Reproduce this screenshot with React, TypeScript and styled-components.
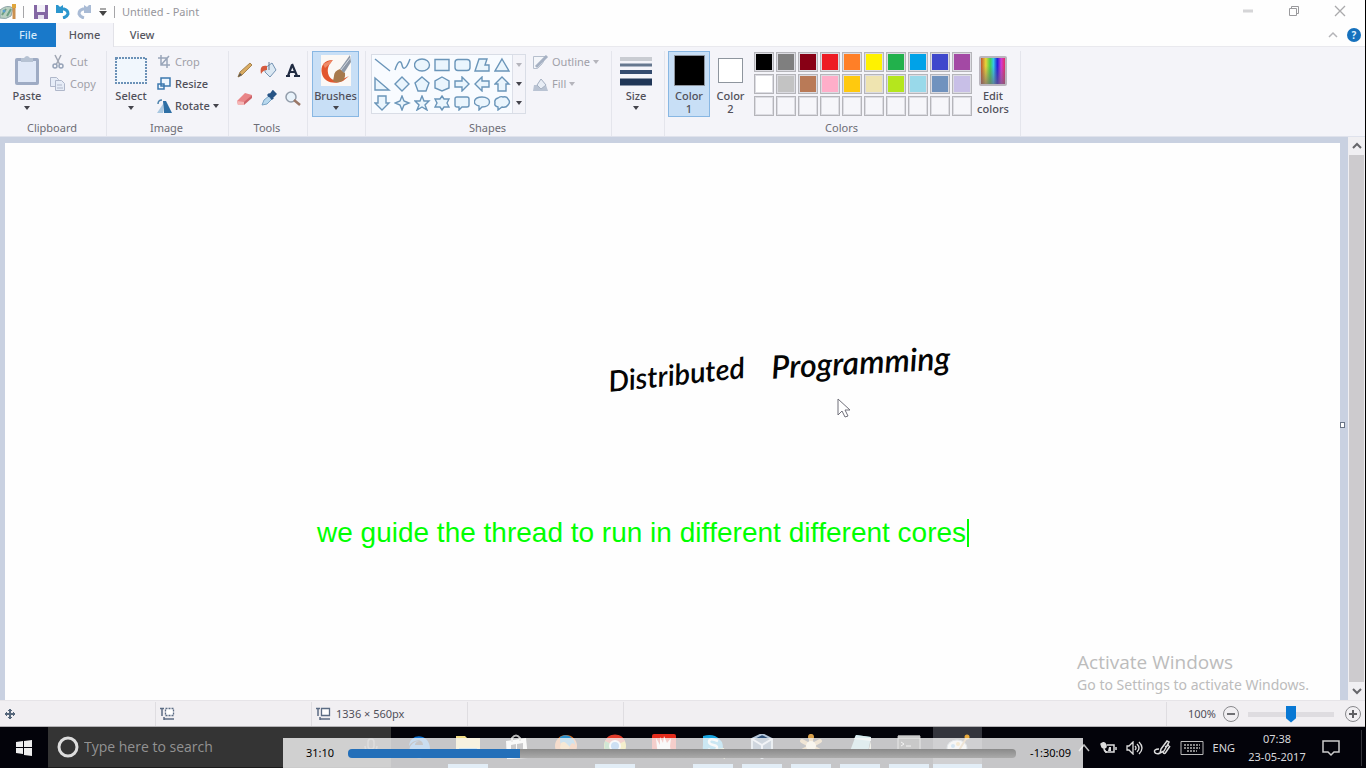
import React from "react";
import styled, { createGlobalStyle } from "styled-components";

const GlobalStyle = createGlobalStyle`
  *, *::before, *::after { box-sizing: border-box; }
  body { margin: 0; background: #000; font-family: "Noto Sans", "Open Sans", sans-serif; font-size: 11px; line-height: 14px; color: #50505a; }
  button { font: inherit; color: inherit; background: none; border: 0; padding: 0; margin: 0; cursor: pointer; }
  svg { display: block; flex: none; }
`;

const Screen = styled.div`
  position: relative;
  display: flex;
  flex-direction: column;
  height: 100vh;
  min-height: 480px;
  overflow: hidden;
`;
const PaintWindow = styled.div`
  flex: 1;
  min-height: 0;
  display: flex;
  flex-direction: column;
  margin-right: 1px;
  background: #f4f4f9;
`;

/* ---------- title bar and tabs ---------- */
const TitleBar = styled.header`
  display: flex;
  align-items: center;
  height: 23px;
  padding-right: 19px;
  background: #fefefe;
`;
const QuickAccess = styled.div`
  display: flex;
  align-items: center;
`;
const QuickButton = styled.button<{ $w?: number }>`
  display: flex;
  align-items: center;
  justify-content: center;
  width: ${(p) => p.$w ?? 22}px;
  height: 22px;
`;
const Divider = styled.span<{ $before?: number }>`
  width: 1px;
  height: 12px;
  margin-left: ${(p) => p.$before ?? 0}px;
  background: #a5a5a8;
`;
const Title = styled.h1`
  flex: 1;
  margin: 0 0 0 7px;
  font-size: 11px;
  font-weight: 400;
  color: #96969c;
`;
const WindowButtons = styled.div`
  display: flex;
  gap: 34px;
`;
const WindowButton = styled.button`
  width: 12px;
  height: 20px;
  display: flex;
  align-items: flex-start;
  padding-top: 3px;
`;
const TabBar = styled.nav`
  display: flex;
  align-items: stretch;
  height: 24px;
  background: #fefefe;
  border-bottom: 1px solid #e9e9ee;
`;
const Tab = styled.button<{ $kind?: "file" | "active" }>`
  width: ${(p) => (p.$kind === "active" ? 58 : 56)}px;
  height: 24px;
  font-weight: 500;
  color: ${(p) => (p.$kind === "file" ? "#d6ebfb" : "#55555e")};
  background: ${(p) =>
    p.$kind === "file" ? "#1979ca" : p.$kind === "active" ? "#f4f4f9" : "none"};
  border-right: ${(p) => (p.$kind === "active" ? "1px solid #e2e2e8" : "0")};
`;
const TabTools = styled.div`
  display: flex;
  align-items: center;
  gap: 9px;
  margin-left: auto;
  padding-right: 4px;
`;
const HelpButton = styled.button`
  width: 14px;
  height: 14px;
  border-radius: 50%;
  background: #1671bd;
  color: #dceefc;
  font-size: 10px;
  font-weight: 700;
  line-height: 14px;
`;

/* ---------- ribbon ---------- */
const Ribbon = styled.div`
  display: flex;
  height: 89px;
  padding-top: 4px;
  background: #f4f4f9;
`;
const Group = styled.section<{ $w: number }>`
  flex: none;
  display: flex;
  flex-direction: column;
  width: ${(p) => p.$w}px;
  border-right: 1px solid #e4e5ec;
`;
const GroupBody = styled.div<{ $pad?: number; $gap?: number }>`
  flex: 1;
  display: flex;
  align-items: flex-start;
  gap: ${(p) => p.$gap ?? 0}px;
  padding-left: ${(p) => p.$pad ?? 0}px;
`;
const GroupLabel = styled.h2`
  height: 15px;
  margin: 0;
  padding-right: 2px;
  font-size: 11px;
  font-weight: 400;
  text-align: center;
  color: #6c6c75;
`;
const BigButton = styled.button<{ $w: number; $on?: boolean }>`
  display: flex;
  flex-direction: column;
  align-items: center;
  width: ${(p) => p.$w}px;
  height: 66px;
  border: 1px solid ${(p) => (p.$on ? "#88b7e3" : "transparent")};
  background: ${(p) => (p.$on ? "#c8dff6" : "none")};
`;
const BigArt = styled.span`
  display: flex;
  align-items: center;
  justify-content: center;
  height: 37px;
`;
const BigText = styled.span`
  line-height: 13px;
  font-weight: 500;
`;
const Caret = styled.span<{ $dim?: boolean }>`
  border: 3px solid transparent;
  border-top: 4px solid ${(p) => (p.$dim ? "#b5b5bc" : "#44444c")};
  border-bottom: 0;
`;
const CaretGap = styled(Caret)`
  margin-top: 4px;
`;
const Stack = styled.div`
  display: flex;
  flex-direction: column;
  align-items: flex-start;
`;
const SmallButton = styled.button<{ $dim?: boolean; $strong?: boolean }>`
  display: flex;
  align-items: center;
  gap: 3px;
  height: 22px;
  color: ${(p) => (p.$dim ? "#a0a0a8" : "#50505a")};
  font-weight: ${(p) => (p.$strong ? 500 : 400)};
`;
const ToolGrid = styled.div`
  display: grid;
  grid-template-columns: repeat(3, 24px);
  grid-auto-rows: 28px;
  padding-top: 5px;
`;
const IconButton = styled.button`
  display: flex;
  align-items: center;
  justify-content: center;
`;
const Gallery = styled.div`
  display: flex;
  height: 60px;
  margin-top: 3px;
  border: 1px solid #d9dde6;
  background: #f8fbff;
`;
const ShapeGrid = styled.div`
  display: grid;
  grid-template-columns: repeat(7, 20px);
  grid-auto-rows: 19px;
`;
const GalleryScroll = styled.div`
  display: flex;
  flex-direction: column;
  justify-content: space-around;
  align-items: center;
  width: 13px;
  border-left: 1px solid #dcdfe8;
  background: #f4f4f9;
`;
const ColorChip = styled.span<{ $c: string; $size: number }>`
  width: ${(p) => p.$size}px;
  height: ${(p) => p.$size}px;
  border: 1px solid #8e959e;
  background: ${(p) => p.$c};
`;
const Palette = styled.div`
  display: grid;
  grid-template-columns: repeat(10, 20px);
  grid-auto-rows: 20px;
  gap: 2px;
  margin: 1px 0 0 3px;
`;
const Swatch = styled.button<{ $c: string }>`
  border: 1px solid #b5b5ba;
  background: ${(p) => p.$c};
  box-shadow: inset 0 0 0 1px #dcdce2;
`;
const Spectrum = styled.span`
  width: 28px;
  height: 30px;
  border: 2px solid #b9b5bd;
  border-radius: 2px;
  background: linear-gradient(180deg, transparent 30%, rgba(110, 100, 120, 0.65)),
    linear-gradient(90deg, #c0552e, #e8d53a 20%, #46d04c 38%, #35c8e6 52%, #2020d8 68%, #d03ad6 84%, #e03060);
`;

/* ---------- drawing area ---------- */
const Workspace = styled.main`
  flex: 1;
  min-height: 0;
  display: flex;
  border-top: 1px solid #dfe2ec;
`;
const Desk = styled.div`
  flex: 1;
  min-width: 0;
  padding: 6px 8px 0 5px;
  background: #c9d1e1;
`;
const Sheet = styled.div`
  position: relative;
  height: 100%;
  background: #fefefe;
`;
const Ink = styled.span<{ $x: number; $y: number; $size: number; $tilt: number }>`
  position: absolute;
  left: ${(p) => p.$x}px;
  top: ${(p) => p.$y}px;
  font: italic 600 ${(p) => p.$size}px/32px "Lato", sans-serif;
  color: #050505;
  white-space: nowrap;
  transform: rotate(${(p) => p.$tilt}deg);
`;
const Pointer = styled.svg`
  position: absolute;
  left: 832px;
  top: 255px;
`;
const Caption = styled.p`
  position: absolute;
  left: 312px;
  top: 376px;
  margin: 0;
  padding-right: 1px;
  border-right: 2px solid #00ff00;
  font: 28px/28px "Liberation Sans", Arial, sans-serif;
  font-kerning: none;
  font-variant-ligatures: none;
  color: #00ff00;
  white-space: nowrap;
`;
const Watermark = styled.aside`
  position: absolute;
  right: 31px;
  bottom: 4px;
  color: #bcbcbc;
`;
const WatermarkTitle = styled.p`
  margin: 0;
  font: 19px/24px "Open Sans", sans-serif;
`;
const WatermarkText = styled.p`
  margin: 0;
  font-size: 14px;
  line-height: 22px;
`;
const ResizeHandle = styled.span`
  position: absolute;
  right: -5px;
  top: 50%;
  width: 5px;
  height: 6px;
  border: 1px solid #697486;
  background: #fff;
`;
const ScrollBar = styled.div`
  display: flex;
  flex-direction: column;
  width: 17px;
  background: #f0eff2;
`;
const ScrollArrow = styled.button`
  display: flex;
  align-items: center;
  justify-content: center;
  height: 18px;
`;
const ScrollThumb = styled.div`
  flex: 1;
  margin: 0 1px;
  background: #cdcbce;
`;

/* ---------- status bar ---------- */
const StatusBar = styled.footer`
  display: flex;
  align-items: stretch;
  height: 27px;
  padding-top: 1px;
  background: #f1eff2;
  border-top: 1px solid #e6e4e8;
  border-bottom: 1px solid #b5b3b6;
`;
const StatusCell = styled.div<{ $w?: number }>`
  display: flex;
  align-items: center;
  gap: 5px;
  width: ${(p) => (p.$w ? p.$w + "px" : "auto")};
  flex: ${(p) => (p.$w ? "none" : "1")};
  padding-left: 4px;
  border-right: 1px solid #dfdde1;
`;
const ZoomBox = styled.div`
  display: flex;
  align-items: center;
  gap: 7px;
  padding: 0 4px 0 21px;
`;
const RoundButton = styled.button`
  display: flex;
  align-items: center;
  justify-content: center;
  width: 16px;
  height: 16px;
  border: 1px solid #88888c;
  border-radius: 50%;
`;
const ZoomSlider = styled.input`
  appearance: none;
  width: 86px;
  height: 18px;
  margin: 0 4px 0 2px;
  background: linear-gradient(#dedce0, #dedce0) center / 100% 5px no-repeat;
  &::-webkit-slider-thumb {
    appearance: none;
    width: 10px;
    height: 17px;
    background: #0878d4;
    clip-path: polygon(0 0, 100% 0, 100% 75%, 50% 100%, 0 75%);
  }
`;

/* ---------- taskbar ---------- */
const Taskbar = styled.div`
  flex: none;
  display: flex;
  align-items: stretch;
  height: 41px;
  background: #03030a;
  color: #d8d8dc;
`;
const StartButton = styled.button`
  display: flex;
  align-items: center;
  justify-content: center;
  width: 48px;
`;
const SearchBox = styled.label`
  display: flex;
  align-items: center;
  gap: 5px;
  width: 343px;
  padding: 0 12px 0 9px;
  background: #343434;
  border-bottom: 1px solid #1b1b1b;
`;
const SearchInput = styled.input`
  flex: 1;
  min-width: 0;
  padding: 0;
  border: 0;
  outline: 0;
  background: none;
  font: 14px/18px "Open Sans", sans-serif;
  color: #ddd;
  &::placeholder { color: #929292; opacity: 1; }
`;
const AppList = styled.div`
  display: flex;
  padding-left: 3px;
`;
const AppButton = styled.button<{ $open?: boolean; $active?: boolean }>`
  display: flex;
  align-items: flex-start;
  justify-content: center;
  width: 49px;
  padding-top: 7px;
  background: ${(p) => (p.$active ? "#33343c" : "none")};
  background-image: ${(p) =>
    p.$open ? "linear-gradient(#8cc4f0, #8cc4f0)" : "none"};
  background-size: ${(p) => (p.$active ? "100% 4px" : "40px 4px")};
  background-position: center bottom;
  background-repeat: no-repeat;
`;
const Tray = styled.div`
  display: flex;
  align-items: center;
  gap: 9px;
  margin-left: auto;
  padding-right: 4px;
`;
const Clock = styled.time`
  width: 66px;
  text-align: center;
  line-height: 18px;
`;
const TrayText = styled.span`
  line-height: 18px;
`;
const Notice = styled.button`
  margin: 0 12px 0 3px;
`;
const DesktopEdge = styled.span`
  width: 1px;
  height: 36px;
  background: #34343a;
`;

/* ---------- video controls ---------- */
const Player = styled.div`
  position: absolute;
  left: 283px;
  right: 283px;
  bottom: 0;
  display: flex;
  align-items: center;
  gap: 14px;
  height: 30px;
  padding: 0 12px 0 23px;
  background: rgba(247, 247, 247, 0.8);
  color: #000;
`;
const Seek = styled.input`
  appearance: none;
  flex: 1;
  min-width: 0;
  height: 9px;
  margin: 0;
  border-radius: 4px;
  background: linear-gradient(90deg, #236fb9 25.7%, transparent 25.7%),
    linear-gradient(#8a8a8a, #aaaaaa);
  &::-webkit-slider-thumb { appearance: none; width: 1px; height: 9px; }
`;

const blue = { fill: "#eaf5fd", stroke: "#6a95b9", strokeWidth: 1.4 };
const shapes: [string, React.ReactNode][] = [
  ["Line", <path d="M1 2l15 12" />],
  ["Curve", <path fill="none" d="M1 13C4 3 7 3 8 8s4 5 8-6" />],
  ["Oval", <ellipse cx="8" cy="8" rx="7.500" ry="6" />],
  ["Rectangle", <path d="M1 2.500h14v11H1z" />],
  ["Rounded rectangle", <rect x="1" y="2.500" width="15" height="11" rx="3" />],
  ["Polygon", <path d="M5 2h8l-2 6h4v6H1z" />],
  ["Triangle", <path d="M8 2l7 12H1z" />],
  ["Right triangle", <path d="M1 2v12h14z" />],
  ["Diamond", <path d="M8 1l7 7-7 7-7-7z" />],
  ["Pentagon", <path d="M8 1l7 6-3 8H4L1 7z" />],
  ["Hexagon", <path d="M8 1l7 4v7l-7 3-7-3V5z" />],
  ["Right arrow", <path d="M1 5h7V1l7 7-7 7v-4H1z" />],
  ["Left arrow", <path d="M15 5H8V1L1 8l7 7v-4h7z" />],
  ["Up arrow", <path d="M4 15V8H1l7-7 7 7h-3v7z" />],
  ["Down arrow", <path d="M4 1v7H1l7 7 7-7h-3V1z" />],
  ["Four-point star", <path d="M8 1l2 5 5 2-5 2-2 5-2-5-5-2 5-2z" />],
  ["Five-point star", <path d="M8 1l2 5h5l-4 4 2 5-5-3-5 3 2-5-4-4h5z" />],
  ["Six-point star", <path d="M8 1l2 3h5l-2 4 2 4h-5l-2 3-2-3H1l2-4-2-4h5z" />],
  ["Rounded callout", <path d="M3 2h10q2 0 2 2v6q0 2-2 2H8l-3 3v-3H3q-2 0-2-2V4q0-2 2-2z" />],
  ["Oval callout", <path d="M8 2c10 0 10 10 0 10l-3 3v-4C-2 10 -1 2 8 2z" />],
  ["Cloud callout", <path d="M4 3q3-2 5-1 4-1 5 2 3 3 0 6-2 3-6 2l-4 3v-3Q0 11 1 8 0 4 4 3z" />],
];

const palette = [
  ["#000000", "Black"], ["#7f7f7f", "Gray"], ["#880015", "Dark red"], ["#ed1c24", "Red"], ["#ff7f27", "Orange"],
  ["#fff200", "Yellow"], ["#22b14c", "Green"], ["#00a2e8", "Turquoise"], ["#3f48cc", "Indigo"], ["#a349a4", "Purple"],
  ["#ffffff", "White"], ["#c3c3c3", "Light gray"], ["#b97a57", "Brown"], ["#ffaec9", "Rose"], ["#ffc90e", "Gold"],
  ["#efe4b0", "Light yellow"], ["#b5e61d", "Lime"], ["#99d9ea", "Light turquoise"], ["#7092be", "Blue-gray"], ["#c8bfe7", "Lavender"],
  ...Array.from({ length: 10 }, (_, i) => ["#f6f6fa", `Custom color ${i + 1}`]),
];

const tools: [string, React.ReactNode][] = [
  ["Pencil", <><path d="M2 15l2-5L14 1l2 2L6 13z" fill="#d9ab62" stroke="#a68350" /><path d="M2 15l2-4 2 2z" fill="#555" /></>],
  ["Fill", <><path d="M5 6l7-5 4 7-6 7-5-5z" fill="#dbe8f3" stroke="#7493b3" /><path d="M9 0v8" stroke="#667b91" /><path d="M7 4C1 3 0 6 1 12c2-3 3-4 6-4z" fill="#d65a3d" /></>],
  ["Text", <path d="M8 2l5 12M8 3L4 14M2 14h4M10 14h6M6 10h5" stroke="#202b42" strokeWidth="2.200" fill="none" />],
  ["Eraser", <><path d="M1 11L9 3l7 2-8 9-6 1z" fill="#e98588" /><path d="M1 11l7 1v3H2z" fill="#f5b6b6" /><path d="M8 12l8-7v3l-8 7z" fill="#ce6268" /></>],
  ["Color picker", <><path d="M2 15l2-5 5-4 3 3-5 5z" fill="#b7d8ee" stroke="#7ba4c5" /><path d="M8 4l5 5M10 6l3-4 2 2-3 3z" stroke="#275486" strokeWidth="3" /></>],
  ["Magnifier", <><circle cx="7" cy="7" r="5" fill="#e8f2fa" stroke="#929dab" strokeWidth="1.500" /><path d="M10 10l6 5" stroke="#9a7767" strokeWidth="2.500" /></>],
];

const BucketPaint = () => (
  <>
    <ellipse cx="11" cy="14" rx="10" ry="8" fill="#edf0f0" stroke="#889aab" />
    <circle cx="7" cy="12" r="2" fill="#4d9bd6" /><circle cx="12" cy="10" r="2" fill="#e8ae41" /><circle cx="8" cy="17" r="2" fill="#62a65b" />
    <path d="M12 18L21 3" stroke="#c28f46" strokeWidth="2" /><circle cx="21" cy="3" r="2.500" fill="#e8aa3d" />
  </>
);

const apps: { name: string; open?: boolean; active?: boolean; art: React.ReactNode }[] = [
  { name: "Edge", art: <path d="M2 12C3-2 23-1 23 15H8c1 7 9 6 13 3v4C11 28 0 21 3 13c2-4 6-6 9-6-3 1-4 2-4 4h8C16 4 6 5 2 12z" fill="#0f73d2" /> },
  { name: "File Explorer", open: true, art: <><path d="M0 2h9l2 2h13v20H0z" fill="#f2dc84" /><path d="M3 14h18v10h-5v-4H8v4H3z" fill="#3f9fe0" /></> },
  { name: "Store", art: <><path d="M1 7l20-3 2 20-21 1z" fill="#fff" /><path d="M7 8V4q4-5 8 0v3" fill="none" stroke="#bbb" strokeWidth="2" /><path d="M6 11l5-1v5H6zM12 10l6-1v6h-6zM6 16h5v5l-5-1zM12 16h6v6l-6-1z" fill="#18181e" /></> },
  { name: "Firefox", art: <><circle cx="12" cy="12" r="11" fill="#e87020" /><path d="M6 3c7-5 15 1 15 8-2-3-4-2-5 1-3 7-11 2-10-9z" fill="#2c8fca" /><path d="M7 9q3-2 5 0l4 4q-5 7-10 1z" fill="#efb04c" /></> },
  { name: "Chrome", open: true, art: <><circle cx="12" cy="12" r="11" fill="#ecc820" /><path d="M12 12L2 7A11 11 0 0122 7z" fill="#e03a2a" /><path d="M12 12L2 7q-3 13 9 16z" fill="#38a24a" /><circle cx="12" cy="12" r="5" fill="#2c80e0" stroke="#fff" strokeWidth="2" /></> },
  { name: "Recorder", art: <><rect y="0" width="24" height="24" rx="2" fill="#e32c1c" /><path d="M4 4l4 7V3l3 6 1-7 3 7 4-5-1 8q2 7-5 10-7 0-8-8z" fill="#fff" /></> },
  { name: "Skype", open: true, art: <><path d="M2 2q7-2 12 0 9 4 8 14-1 9-10 6Q0 21 2 11z" fill="#1aa5e0" /><path d="M17 7q-9-4-9 1c0 4 9 2 8 6 0 4-7 3-9 1" fill="none" stroke="#fff" strokeWidth="2.500" /><path d="M14 15l9-1 2 11-6-2z" fill="#d9e39a" /></> },
  { name: "VirtualBox", open: true, art: <><path d="M2 5l10-5 10 5v14l-10 5L2 19z" fill="#2f5078" stroke="#b4c5d8" strokeWidth="2" /><path d="M2 5l10 6 10-6M12 11v13" fill="none" stroke="#d6e1ef" strokeWidth="2" /></> },
  { name: "Cluster", open: true, art: <><path d="M12 2v20M3 7l18 10M21 7L3 17" stroke="#d29c4b" strokeWidth="4" strokeLinecap="round" /><circle cx="12" cy="12" r="5" fill="#fbe8c5" /><circle cx="12" cy="3" r="3" fill="#d8a04b" /></> },
  { name: "Notepad", open: true, art: <><path d="M8 1l15 2-4 20-18-3z" fill="#86c4ca" /><path d="M8 1l15 2v4L6 5z" fill="#ddecee" /><path d="M19 23l4-16v16z" fill="#d8d4b7" /></> },
  { name: "Command Prompt", open: true, art: <><path d="M1 2h22v19H1z" fill="#111" stroke="#aaa" /><path d="M1 3h22" stroke="#ccc" strokeWidth="3" /><path d="M4 8l3 2-3 2M9 12h5" stroke="#ddd" fill="none" /></> },
  { name: "Paint", open: true, active: true, art: <BucketPaint /> },
];

const SizeIcon = ({ dashed }: { dashed?: boolean }) => (
  <svg width="15" height="14" fill="none" stroke="#5c6c84">
    <path d="M2 1v8M0 1.500h4" strokeWidth="1.500" />
    <path d="M5.500 1.500h8v7h-8z" fill="#fff" strokeWidth="1.300" strokeDasharray={dashed ? "2 1" : undefined} />
    <path d="M4 12h10M4 10v3" strokeWidth="1.500" />
  </svg>
);

export default function App() {
  return (
    <Screen>
      <GlobalStyle />
      <PaintWindow>
        <TitleBar>
          <QuickAccess>
            <svg width="23" height="20" viewBox="0 0 23 20"><path d="M0 8q7-6 13-2l-2 8q-5 4-11 2z" fill="#b9cfc0" stroke="#8fa5a8" /><path d="M2 13l4-6M7 14l4-7" stroke="#6e9f83" strokeWidth="2" /><circle cx="4" cy="9" r="1.500" fill="#5a9fd0" /><path d="M14 4v13" stroke="#cb9150" strokeWidth="3" /><path d="M14 2v4" stroke="#e0a63c" strokeWidth="4" /></svg>
            <Divider />
            <QuickButton aria-label="Save" $w={34}><svg width="14" height="14"><path d="M0 0h14v14H0z" fill="#8467a4" /><path d="M3 0h8v7H3z" fill="#f2f0f8" /><path d="M4 10h6v4H4z" fill="#e5e0ef" /></svg></QuickButton>
            <QuickButton $w={10} aria-label="Undo"><svg width="14" height="15" viewBox="0 0 14 15"><path d="M3 5h5q4 1 4 5-1 3-5 4" fill="none" stroke="#2b96ce" strokeWidth="3" /><path d="M0 1h2l2 2 3-2v8H0z" fill="#2b96ce" /></svg></QuickButton>
            <QuickButton $w={32} aria-label="Redo"><svg width="14" height="15" viewBox="0 0 14 15"><path d="M11 5H6Q2 6 2 10q1 3 5 4" fill="none" stroke="#a9bbd5" strokeWidth="3" /><path d="M14 1h-2l-2 2-3-2v8h7z" fill="#a9bbd5" /></svg></QuickButton>
            <QuickButton $w={6} aria-label="Customize"><svg width="8" height="8"><path d="M1 1h6" stroke="#555" /><path d="M0 3h8L4 8z" fill="#444" /></svg></QuickButton>
            <Divider $before={8} />
          </QuickAccess>
          <Title>Untitled - Paint</Title>
          <WindowButtons>
            <WindowButton aria-label="Minimize"><svg width="12" height="12"><path d="M1 6h10" stroke="#d5d5d7" strokeWidth="3" /></svg></WindowButton>
            <WindowButton aria-label="Restore"><svg width="12" height="12" fill="none" stroke="#9a9a9d"><path d="M1.500 3.500h7v7h-7zM3.500 3V1.500h7v7H9" /></svg></WindowButton>
            <WindowButton aria-label="Close"><svg width="12" height="12"><path d="M1 1l10 10M11 1L1 11" stroke="#aaaaac" strokeWidth="1.300" /></svg></WindowButton>
          </WindowButtons>
        </TitleBar>

        <TabBar>
          <Tab $kind="file">File</Tab>
          <Tab $kind="active">Home</Tab>
          <Tab>View</Tab>
          <TabTools>
            <button aria-label="Collapse ribbon"><svg width="10" height="8"><path d="M1 6l4-4 4 4" fill="none" stroke="#b4b4b8" strokeWidth="1.500" /></svg></button>
            <HelpButton aria-label="Help">?</HelpButton>
          </TabTools>
        </TabBar>

        <Ribbon>
          <Group $w={107}>
            <GroupBody $pad={6}>
              <BigButton $w={42}>
                <BigArt><svg width="26" height="32"><rect x="1" y="3" width="24" height="27" rx="2" fill="#9eabc4" /><path d="M4 6h18v21H4z" fill="#e0e8f7" /><path d="M7 3h3q3-4 6 0h3v4H7z" fill="#b6c2d3" /></svg></BigArt>
                <BigText>Paste</BigText><CaretGap />
              </BigButton>
              <Stack>
                <SmallButton $dim><svg width="19" height="16" viewBox="0 0 19 16"><path d="M7 1l5 10M13 1L8 11" stroke="#a0a6b3" strokeWidth="1.500" /><circle cx="7" cy="12" r="2" fill="none" stroke="#96a3b8" strokeWidth="1.500" /><circle cx="13" cy="12" r="2" fill="none" stroke="#96a3b8" strokeWidth="1.500" /></svg>Cut</SmallButton>
                <SmallButton $dim><svg width="19" height="16" viewBox="0 0 19 16" fill="#e6ecf7" stroke="#afb7ca"><path d="M2.500 1.500h6l2 2v7h-8z" /><path d="M7.500 4.500h6l3 3v7h-9z" /><path d="M9 9h5M9 12h6" /></svg>Copy</SmallButton>
              </Stack>
            </GroupBody>
            <GroupLabel>Clipboard</GroupLabel>
          </Group>

          <Group $w={122}>
            <GroupBody $pad={4} $gap={6}>
              <BigButton $w={40}>
                <BigArt><svg width="32" height="28"><rect x="1" y="1" width="30" height="25" fill="#f1f7fd" stroke="#6b91b7" strokeWidth="2" strokeDasharray="2 1" /></svg></BigArt>
                <BigText>Select</BigText><CaretGap />
              </BigButton>
              <Stack>
                <SmallButton $dim><svg width="15" height="14" viewBox="0 0 15 14" fill="none" stroke="#99a5b9" strokeWidth="1.500"><path d="M4 0v10h9M1 3h9v10M4 10l8-9" /></svg>Crop</SmallButton>
                <SmallButton $strong><svg width="15" height="14" viewBox="0 0 15 14" fill="#eef6fe" stroke="#3c78ae" strokeWidth="1.500"><path d="M4 1h9v8H4zM1 7h6v5H1z" /></svg>Resize</SmallButton>
                <SmallButton $strong><svg width="15" height="14" viewBox="0 0 15 14"><path d="M6 5v9H0z" fill="#a9c8e1" /><path d="M6 2h3l6 12H7z" fill="#2e6fa5" /><path d="M1 5q0-4 4-4" fill="none" stroke="#4e83ad" strokeWidth="1.500" /></svg>Rotate<Caret /></SmallButton>
              </Stack>
            </GroupBody>
            <GroupLabel>Image</GroupLabel>
          </Group>

          <Group $w={79}>
            <GroupBody $pad={3}>
              <ToolGrid>
                {tools.map(([name, art]) => (
                  <IconButton key={name} aria-label={name}><svg width="17" height="17" viewBox="0 0 17 17">{art}</svg></IconButton>
                ))}
              </ToolGrid>
            </GroupBody>
            <GroupLabel>Tools</GroupLabel>
          </Group>

          <Group $w={58}>
            <GroupBody $pad={4}>
              <BigButton $w={47} $on>
                <BigArt><svg width="32" height="33"><path d="M1 1h30v31H1z" fill="#fbf8f5" /><path d="M13 6C4 6 0 12 2 20c2 8 12 11 21 7l6-5c-9 5-17 6-20 0-3-7 0-12 4-16z" fill="#e2562e" /><path d="M3 10l9-4-1 3-6 5z" fill="#ee8a68" /><path d="M14 22q0-5 6-7l5 4q1 7-5 9-5 1-7-1z" fill="#a7794c" /><path d="M20 15L30 1l1 7-7 11z" fill="#8e98a6" /><path d="M21 16L31 3" stroke="#d5dbe2" /></svg></BigArt>
                <BigText>Brushes</BigText><CaretGap />
              </BigButton>
            </GroupBody>
          </Group>

          <Group $w={246}>
            <GroupBody $pad={5} $gap={6}>
              <Gallery>
                <ShapeGrid>
                  {shapes.map(([name, art]) => (
                    <IconButton key={name} aria-label={name}><svg width="17" height="16" viewBox="0 0 17 16" {...blue}>{art}</svg></IconButton>
                  ))}
                </ShapeGrid>
                <GalleryScroll><Caret $dim /><Caret /><Caret /></GalleryScroll>
              </Gallery>
              <Stack>
                <SmallButton $dim><svg width="17" height="15" viewBox="0 0 17 15"><path d="M1.500 1.500h12l-3 7-5 5h-4z" fill="#f4f6fa" stroke="#b6bfcd" /><path d="M4 12L15 1" stroke="#a6b1c3" strokeWidth="3" /></svg>Outline<Caret $dim /></SmallButton>
                <SmallButton $dim><svg width="17" height="15" viewBox="0 0 17 15"><path d="M1 14l1-6h3l4-6 5 6 2 6z" fill="#b9c3d3" /><path d="M5 8l4-6 5 6-5 4z" fill="#e8edf5" stroke="#a6b1c2" /></svg>Fill<Caret $dim /></SmallButton>
              </Stack>
            </GroupBody>
            <GroupLabel>Shapes</GroupLabel>
          </Group>

          <Group $w={53}>
            <GroupBody $pad={3}>
              <BigButton $w={42}>
                <BigArt><svg width="32" height="30"><path d="M0 3h32" stroke="#c9ccd2" strokeWidth="4" /><path d="M0 9h32" stroke="#65778e" strokeWidth="3" /><path d="M0 16h32" stroke="#344b6f" strokeWidth="4" /><path d="M0 26h32" stroke="#203657" strokeWidth="7" /></svg></BigArt>
                <BigText>Size</BigText><CaretGap />
              </BigButton>
            </GroupBody>
          </Group>

          <Group $w={356}>
            <GroupBody $pad={3} $gap={1}>
              <BigButton $w={42} $on><BigArt><ColorChip $c="#000" $size={31} /></BigArt><BigText>Color<br />1</BigText></BigButton>
              <BigButton $w={39}><BigArt><ColorChip $c="#fff" $size={25} /></BigArt><BigText>Color<br />2</BigText></BigButton>
              <Palette>
                {palette.map(([c, name]) => <Swatch key={name} $c={c} aria-label={name} />)}
              </Palette>
              <BigButton $w={40}><BigArt><Spectrum /></BigArt><BigText>Edit<br />colors</BigText></BigButton>
            </GroupBody>
            <GroupLabel>Colors</GroupLabel>
          </Group>
        </Ribbon>

        <Workspace>
          <Desk>
            <Sheet>
              <Ink $x={603} $y={215} $size={29} $tilt={-6}>Distributed</Ink>
              <Ink $x={766} $y={203} $size={32} $tilt={-3}>Programming</Ink>
              <Pointer width="14" height="21"><path d="M1 1v16l4-4 3 6 3-1-3-6h5z" fill="#fff" stroke="#70707a" /></Pointer>
              <Caption>we guide the thread to run in different different cores</Caption>
              <Watermark>
                <WatermarkTitle>Activate Windows</WatermarkTitle>
                <WatermarkText>Go to Settings to activate Windows.</WatermarkText>
              </Watermark>
              <ResizeHandle />
            </Sheet>
          </Desk>
          <ScrollBar>
            <ScrollArrow aria-label="Scroll up"><svg width="10" height="8"><path d="M1 6l4-4 4 4" fill="none" stroke="#66666a" strokeWidth="2" /></svg></ScrollArrow>
            <ScrollThumb />
            <ScrollArrow aria-label="Scroll down"><svg width="10" height="8"><path d="M1 2l4 4 4-4" fill="none" stroke="#66666a" strokeWidth="2" /></svg></ScrollArrow>
          </ScrollBar>
        </Workspace>

        <StatusBar>
          <StatusCell $w={156}><svg width="12" height="12" stroke="#56677b" fill="none"><path d="M6 1v10M1 6h10" strokeWidth="2" /><path d="M3 4L1 6l2 2M9 4l2 2-2 2M4 3l2-2 2 2M4 9l2 2 2-2" /></svg></StatusCell>
          <StatusCell $w={156}><SizeIcon dashed /></StatusCell>
          <StatusCell $w={156}><SizeIcon />1336 × 560px</StatusCell>
          <StatusCell $w={156} />
          <StatusCell />
          <ZoomBox>
            100%
            <RoundButton aria-label="Zoom out"><svg width="8" height="8"><path d="M0 4h8" stroke="#707074" strokeWidth="2" /></svg></RoundButton>
            <ZoomSlider type="range" aria-label="Zoom" defaultValue={50} />
            <RoundButton aria-label="Zoom in"><svg width="8" height="8"><path d="M0 4h8M4 0v8" stroke="#606064" strokeWidth="2" /></svg></RoundButton>
          </ZoomBox>
        </StatusBar>
      </PaintWindow>

      <Taskbar>
        <StartButton aria-label="Start"><svg width="16" height="17" fill="#eee"><path d="M0 3l7-1v6H0zM8 2l8-1v7H8zM0 9h7v6l-7-1zM8 9h8v8l-8-1z" /></svg></StartButton>
        <SearchBox>
          <svg width="22" height="22"><circle cx="11" cy="11" r="9" fill="none" stroke="#ddd" strokeWidth="3" /></svg>
          <SearchInput aria-label="Search" placeholder="Type here to search" />
          <svg width="16" height="20" fill="none" stroke="#777" strokeWidth="1.500"><rect x="5" y="2" width="6" height="10" rx="3" /><path d="M2 9q0 6 6 6t6-6M8 15v4" /></svg>
        </SearchBox>
        <AppList>
          {apps.map((a) => (
            <AppButton key={a.name} aria-label={a.name} $open={a.open} $active={a.active}><svg width="24" height="25" viewBox="0 0 24 25">{a.art}</svg></AppButton>
          ))}
        </AppList>
        <Tray>
          <svg width="13" height="9" fill="none" stroke="#bbb" strokeWidth="1.500"><path d="M1 8l5-6 5 6" /></svg>
          <svg width="17" height="14" fill="none" stroke="#ddd" strokeWidth="1.500"><path d="M7 4h7v7H5M16 6v3" /><path d="M1 3q3-3 5 1v2q-2 2-4 0zM4 7q0 4 3 4" fill="#ddd" /><path d="M9 6h2v4H8z" fill="#ddd" stroke="none" /></svg>
          <svg width="18" height="14" fill="none" stroke="#ddd" strokeWidth="1.300"><path d="M1 5h2l4-4v12L3 9H1zM9 5q2 2 0 4M11 3q4 4 0 8M13 1q6 6 0 12" /></svg>
          <svg width="18" height="18" fill="none" stroke="#ddd" strokeWidth="1.500"><path d="M8 10l6-8 2 1-5 9-4 2zM6 10c-8 0-4 7 1 4M10 13q1 3 3 0l4-6M12 8l4-2" /></svg>
          <svg width="24" height="16" fill="none" stroke="#bbb"><path d="M1 1.500h22v13H1z" /><path d="M4 5h16M4 8h16M7 11h10" stroke="#888" strokeDasharray="2 1" strokeWidth="2" /></svg>
          <TrayText>ENG</TrayText>
          <Clock>07:38<br />23-05-2017</Clock>
          <Notice aria-label="Notifications"><svg width="18" height="18" fill="none" stroke="#ccc" strokeWidth="1.500"><path d="M1 2h16v11h-5l-3 3-3-3H1z" /></svg></Notice>
          <DesktopEdge />
        </Tray>
      </Taskbar>

      <Player>
        <span>31:10</span>
        <Seek type="range" aria-label="Playback position" max={7279} defaultValue={1870} />
        <span>-1:30:09</span>
      </Player>
    </Screen>
  );
}
